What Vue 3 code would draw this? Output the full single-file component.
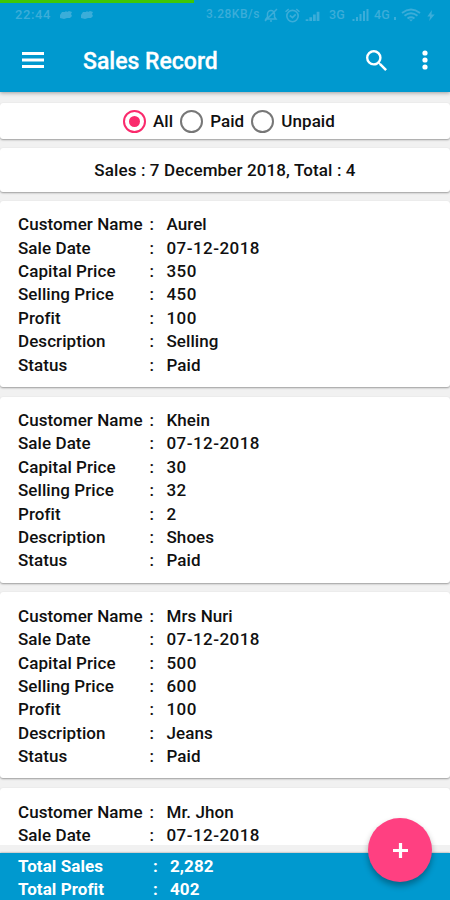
<script setup>
import { ref } from 'vue'

const filters = ['All', 'Paid', 'Unpaid']
const selected = ref('All')

const makeRows = (name, capital, selling, profit, description) => [
  ['Customer Name', name],
  ['Sale Date', '07-12-2018'],
  ['Capital Price', capital],
  ['Selling Price', selling],
  ['Profit', profit],
  ['Description', description],
  ['Status', 'Paid'],
]

const sales = [
  makeRows('Aurel', '350', '450', '100', 'Selling'),
  makeRows('Khein', '30', '32', '2', 'Shoes'),
  makeRows('Mrs Nuri', '500', '600', '100', 'Jeans'),
  [['Customer Name', 'Mr. Jhon'], ['Sale Date', '07-12-2018']],
]

const totals = [
  ['Total Sales', '2,282'],
  ['Total Profit', '402'],
]
</script>

<template>
  <div class="screen">
    <header class="header">
      <div class="progress"></div>
      <div class="status">
        <span class="clock">22:44</span>
        <svg class="game" viewBox="0 0 14 10"><path d="M1 5l2-3 3 0 1-1 1 1 2-1 3 1-1 2 1 2-2 2-3 0-3 1-4-1z" /></svg>
        <svg class="game second" viewBox="0 0 14 10"><path d="M1 5l2-3 3 0 1-1 1 1 2-1 3 1-1 2 1 2-2 2-3 0-3 1-4-1z" /></svg>
        <span class="speed">3.28KB/s</span>
        <svg class="bell line" viewBox="0 0 14 14"><path d="M2 11h10l-1.500-2V6a3.500 3.500 0 0 0-7 0v3zM6 13h2M1 13L13 1" /></svg>
        <svg class="alarm line" viewBox="0 0 14 14"><circle cx="7" cy="7.500" r="5.300" /><path d="M.5 3.500l3-2.500M13.500 3.500l-3-2.500M4.500 7L7 9l3-3" /></svg>
        <svg class="signal" viewBox="0 0 16 12"><path d="M0 10h3v2H0zM4 8h3v4H4zM8 5h3v7H8zM12 2h3v10h-3z" /></svg>
        <span class="net three">3G</span>
        <svg class="signal wide" viewBox="0 0 16 12"><path d="M0 10h2v2H0zM3.500 8h2v4h-2zM7 5h2v7H7zM10.500 2h2v10h-2zM14 0h2v12h-2z" /></svg>
        <span class="net four">4G</span>
        <span class="dot"></span>
        <svg class="wifi" viewBox="0 0 20 14"><path class="arc" d="M1 5q9-7 18 0M3.500 7.800q6.500-5 13 0M6.500 10.500q3.500-2.500 7 0" /><path d="M8 11.500h4l-2 2z" /></svg>
        <svg class="bolt" viewBox="0 0 8 12"><path d="M5 0L0 7h3l-1 5 6-7H4.500z" /></svg>
      </div>
      <div class="toolbar">
        <svg class="menu" viewBox="0 0 22 16"><path d="M0 0h22v3H0zM0 6.500h22v3H0zM0 13h22v3H0z" /></svg>
        <h1>Sales Record</h1>
        <svg class="search" viewBox="3 3 17.500 17.500"><path d="M15.500 14h-.79l-.28-.27A6.471 6.471 0 0 0 16 9.500 6.500 6.500 0 1 0 9.500 16c1.610 0 3.090-.59 4.230-1.570l.27.28v.79l5 4.990L20.490 19l-4.990-5zm-6 0C7.010 14 5 11.990 5 9.500S7.010 5 9.500 5 14 7.010 14 9.500 11.990 14 9.500 14z" /></svg>
        <svg class="more" viewBox="0 0 6 20"><circle cx="3" cy="3" r="2.600" /><circle cx="3" cy="10" r="2.600" /><circle cx="3" cy="17" r="2.600" /></svg>
      </div>
    </header>

    <main class="content">
      <section class="card filters">
        <label v-for="f in filters" :key="f" class="option" @click="selected = f">
          <span class="radio" :class="{ on: selected === f }"></span>
          <span class="name">{{ f }}</span>
        </label>
      </section>
      <section class="card summary"><span>Sales : 7 December 2018, Total : 4</span></section>
      <section v-for="(rows, i) in sales" :key="i" class="card sale">
        <div v-for="[label, value] in rows" :key="label" class="row">
          <span class="label">{{ label }}</span><span class="colon">:</span><span :class="{ numeric: /^\d/.test(value) }">{{ value }}</span>
        </div>
      </section>
    </main>

    <footer class="footer">
      <div v-for="[label, value] in totals" :key="label" class="row">
        <span class="label">{{ label }}</span><span class="colon">:</span><span>{{ value }}</span>
      </div>
    </footer>

    <button class="fab" aria-label="Add">
      <svg viewBox="0 0 16 16"><path d="M6.300 0h3.400v6.300H16v3.400H9.700V16H6.300V9.700H0V6.300h6.300z" /></svg>
    </button>
  </div>
</template>

<style>
body {
  margin: 0;
  overflow: hidden;
}
</style>

<style scoped>
.screen {
  position: relative;
  display: flex;
  flex-direction: column;
  width: 450px;
  height: 900px;
  overflow: hidden;
  background: #f1f1f1;
  color: #101010;
  font: 500 17px/23.4px Roboto, sans-serif;
  letter-spacing: 0.07px;
}
.header {
  flex: none;
  height: 92px;
  background: #0099cf;
  box-shadow: 0 1px 4px rgba(0, 0, 0, 0.35);
  z-index: 1;
}
.progress {
  width: 194px;
  height: 2.500px;
  background: #3fc706;
}
.status {
  display: flex;
  align-items: center;
  height: 25px;
  padding-left: 15px;
  color: #3badd9;
  font-size: 12px;
  letter-spacing: 0.2px;
  white-space: nowrap;
}
.status svg { flex: none; fill: currentColor; }
.status svg.line { fill: none; stroke: currentColor; stroke-width: 1.5; }
.status .arc { fill: none; stroke: currentColor; stroke-width: 1.9; }
.clock { width: 44px; font-size: 13px; letter-spacing: 0.6px; }
.game { width: 14px; height: 10px; }
.game.second { margin-left: 7px; }
.speed { width: 58px; margin-left: 112px; letter-spacing: 0.5px; }
.bell { width: 14px; height: 14px; }
.alarm { width: 15px; height: 15px; margin-left: 7px; }
.signal { width: 16px; height: 11px; margin-left: 5px; }
.net { width: 17px; font-size: 12.500px; }
.three { margin-left: 8px; }
.signal.wide { width: 17px; height: 12px; margin-left: 6px; }
.four { margin-left: 5px; }
.dot { width: 2px; height: 3px; margin: 6px 0 0 3px; background: currentColor; }
.wifi { width: 20px; height: 14px; margin-left: 5px; }
.bolt { width: 8px; height: 11px; margin-left: 6px; }
.toolbar {
  display: flex;
  align-items: center;
  height: 65px;
  padding: 0 22px;
  color: #fff;
}
.toolbar svg { flex: none; fill: currentColor; }
.menu { width: 22px; height: 16px; }
h1 {
  flex: 1;
  margin: 4px 0 0 39px;
  font-size: 23px;
  line-height: 30px;
  font-weight: 500;
  letter-spacing: 0;
  -webkit-text-stroke: 0.3px #fff;
}
.search { width: 21px; height: 21px; margin-right: 35px; }
.more { width: 6px; height: 20px; }
.content {
  flex: 1;
  min-height: 0;
  overflow: hidden;
  padding-top: 11px;
}
.card {
  background: #fff;
  border-radius: 3px;
  box-shadow: 0 1px 2px rgba(0, 0, 0, 0.36);
}
.filters {
  display: flex;
  align-items: center;
  box-sizing: border-box;
  height: 36px;
  padding: 1px 0 0 123px;
}
.option { display: flex; align-items: center; }
.option + .option { margin-left: 7px; }
.radio {
  display: flex;
  align-items: center;
  justify-content: center;
  box-sizing: border-box;
  width: 23px;
  height: 23px;
  margin-right: 7px;
  border: 2px solid #777;
  border-radius: 50%;
}
.radio.on { border: 2px solid #fa2a6c; }
.radio.on::after {
  content: '';
  width: 11px;
  height: 11px;
  border-radius: 50%;
  background: #fa2a6c;
}
.name { padding-top: 1px; }
.summary {
  display: flex;
  align-items: center;
  justify-content: center;
  box-sizing: border-box;
  height: 43.500px;
  margin-top: 9px;
  padding-top: 2px;
  letter-spacing: 0.12px;
}
.sale {
  box-sizing: border-box;
  height: 186px;
  margin-top: 9.800px;
  padding: 12.400px 18px 0;
}
.summary + .sale { margin-top: 9.300px; }
.row { display: flex; height: 23.400px; white-space: nowrap; }
.label { width: 131.500px; }
.colon { width: 17px; }
.numeric { letter-spacing: 0.45px; }
.footer {
  flex: none;
  box-sizing: border-box;
  height: 47px;
  margin-top: 8px;
  padding: 1.500px 18px 0;
  background: #0099cf;
  box-shadow: 0 0 2px rgba(0, 0, 0, 0.4);
  color: #fff;
  font-weight: 700;
}
.footer .label { width: 135px; }
.footer .colon { width: 17px; }
.fab {
  position: absolute;
  left: 368px;
  top: 818px;
  display: grid;
  place-items: center;
  width: 64px;
  height: 64px;
  padding: 0;
  border: 0;
  border-radius: 50%;
  background: #ff4081;
  box-shadow: 0 4px 6px rgba(0, 0, 0, 0.32);
  z-index: 2;
}
.fab svg { width: 15px; height: 15px; fill: #fff; }
</style>
